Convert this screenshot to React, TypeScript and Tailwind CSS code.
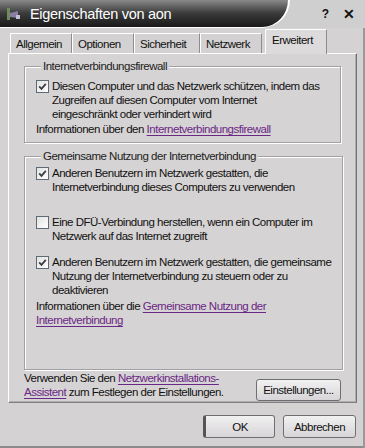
import React from "react";

const font = { fontFamily: '"Liberation Sans", Arial, sans-serif' };

function CheckBox({ checked }: { checked?: boolean }) {
  return (
    <div className="mt-[1px] flex h-[13px] w-[13px] shrink-0 items-center justify-center border border-[#5e6a74] bg-gradient-to-br from-[#e2e2e2] to-white">
      {checked && (
        <svg width="9" height="9" viewBox="0 0 9 9">
          <path d="M1.2 4.4 L3.5 6.8 L7.8 1.8" fill="none" stroke="#3a3f46" strokeWidth="1.8" />
        </svg>
      )}
    </div>
  );
}

function Link({ children }: { children: React.ReactNode }) {
  return <span className="text-[#6b2785] underline underline-offset-2">{children}</span>;
}

function Group({ title, children, className }: { title: string; children: React.ReactNode; className?: string }) {
  return (
    <fieldset
      className={`mx-[15px] border border-[#a2a0a4] px-[11px] shadow-[1px_1px_0_#ffffff,inset_1px_1px_0_#ffffff] ${className ?? ""}`}
    >
      <legend className="ml-[5px] bg-[#d6d3d4] px-[2px] text-[#222]">{title}</legend>
      {children}
    </fieldset>
  );
}

function Tab({ label, width, active }: { label: string; width: string; active?: boolean }) {
  if (active) {
    return (
      <div className={`relative z-10 -mb-[1px] ml-[3px] flex h-[25px] items-start rounded-t-[2px] border border-b-0 border-white border-r-[#8e8c90] bg-[#dcdadb] pl-[6px] pt-[3px] ${width}`}>
        {label}
      </div>
    );
  }
  return (
    <div className={`flex h-[20px] items-center border-t border-l border-white border-r border-r-[#8e8c90] bg-[#d3d1d2] pl-[5px] ${width}`}>
      {label}
    </div>
  );
}

function Button({ label, className }: { label: string; className?: string }) {
  return (
    <div
      className={`flex items-center justify-center rounded-[3px] border border-[#6f6e72] bg-gradient-to-b from-[#f2f1f2] to-[#d7d5d7] ${className ?? ""}`}
    >
      {label}
    </div>
  );
}

export default function App() {
  return (
    <div
      className="relative flex h-[448px] w-[365px] flex-col overflow-hidden bg-[#d5d2d3] text-[11.5px] leading-[14px] tracking-[-0.5px] text-[#111]"
      style={font}
    >
      {/* Title bar */}
      <div className="relative flex h-[28px] shrink-0 items-center bg-[#d0cfd0]">
        <div className="absolute left-0 top-0 h-[28px] w-[290px] rounded-br-[36px] border-r-2 border-b border-white bg-gradient-to-b from-[#8a8a8a] via-[#3a3a3a] to-[#1a1a1a]" />
        <div className="relative ml-[6px] flex items-center">
          <svg width="16" height="14" viewBox="0 0 16 14">
            <rect x="1" y="1" width="3" height="12" fill="#6f8a5c" />
            <path d="M4 6 L12 4 L12 11 L4 10 Z" fill="#8a7fa3" />
            <rect x="10" y="8" width="4" height="4" fill="#c7c1d8" />
          </svg>
          <span className="ml-[8px] text-[14.5px] tracking-[-0.3px] text-white">Eigenschaften von aon</span>
        </div>
        <div className="relative ml-auto mr-[10px] flex items-center gap-[14px] text-[12px] font-bold tracking-normal text-[#111]">
          <span>?</span>
          <span className="text-[14px]">✕</span>
        </div>
      </div>

      {/* Tabs */}
      <div className="ml-[10px] mt-[4px] flex h-[21px] items-end">
        <Tab label="Allgemein" width="w-[62px]" />
        <Tab label="Optionen" width="w-[62px]" />
        <Tab label="Sicherheit" width="w-[66px]" />
        <Tab label="Netzwerk" width="w-[62px]" />
        <Tab label="Erweitert" width="w-[62px]" active />
      </div>

      {/* Panel */}
      <div className="mx-[8px] flex h-[350px] flex-col border border-t-white border-l-white border-r-[#707070] border-b-[#808080] bg-[#d6d3d4] shadow-[inset_-1px_-1px_0_#b0aeb0]">
        <Group title="Internetverbindungsfirewall" className="mt-[5px] pb-[6px]">
          <div className="mt-[6px] flex gap-[3px]">
            <CheckBox checked />
            <div className="whitespace-nowrap">
              Diesen Computer und das Netzwerk schützen, indem das
              <br />
              Zugreifen auf diesen Computer vom Internet
              <br />
              eingeschränkt oder verhindert wird
            </div>
          </div>
          <div className="mt-[1px] whitespace-nowrap">
            Informationen über den <Link>Internetverbindungsfirewall</Link>
          </div>
        </Group>

        <Group title="Gemeinsame Nutzung der Internetverbindung" className="mt-[6px] h-[221px]">
          <div className="mt-[3px] flex gap-[3px]">
            <CheckBox checked />
            <div className="whitespace-nowrap">
              Anderen Benutzern im Netzwerk gestatten, die
              <br />
              Internetverbindung dieses Computers zu verwenden
            </div>
          </div>
          <div className="mt-[21px] flex gap-[3px]">
            <CheckBox />
            <div className="whitespace-nowrap">
              Eine DFÜ-Verbindung herstellen, wenn ein Computer im
              <br />
              Netzwerk auf das Internet zugreift
            </div>
          </div>
          <div className="mt-[12px] flex gap-[3px]">
            <CheckBox checked />
            <div className="whitespace-nowrap">
              Anderen Benutzern im Netzwerk gestatten, die gemeinsame
              <br />
              Nutzung der Internetverbindung zu steuern oder zu
              <br />
              deaktivieren
            </div>
          </div>
          <div className="mt-[2px] whitespace-nowrap">
            Informationen über die <Link>Gemeinsame Nutzung der</Link>
            <br />
            <Link>Internetverbindung</Link>
          </div>
        </Group>

        <div className="mx-[15px] mt-[1px] flex items-start justify-between">
          <div className="whitespace-nowrap">
            Verwenden Sie den <Link>Netzwerkinstallations-</Link>
            <br />
            <Link>Assistent</Link> zum Festlegen der Einstellungen.
          </div>
          <Button label="Einstellungen..." className="mt-[8px] h-[22px] w-[85px]" />
        </div>
      </div>

      {/* Footer buttons */}
      <div className="mr-[9px] mt-[12px] flex justify-end gap-[8px]">
        <Button label="OK" className="h-[23px] w-[72px] border-l-[3px] border-l-[#555]" />
        <Button label="Abbrechen" className="h-[23px] w-[73px]" />
      </div>

      <div className="absolute bottom-0 left-0 h-[2px] w-full bg-[#8c8a8d]" />
      <div className="absolute right-0 top-[28px] h-full w-[2px] bg-[#9a989b]" />
    </div>
  );
}
